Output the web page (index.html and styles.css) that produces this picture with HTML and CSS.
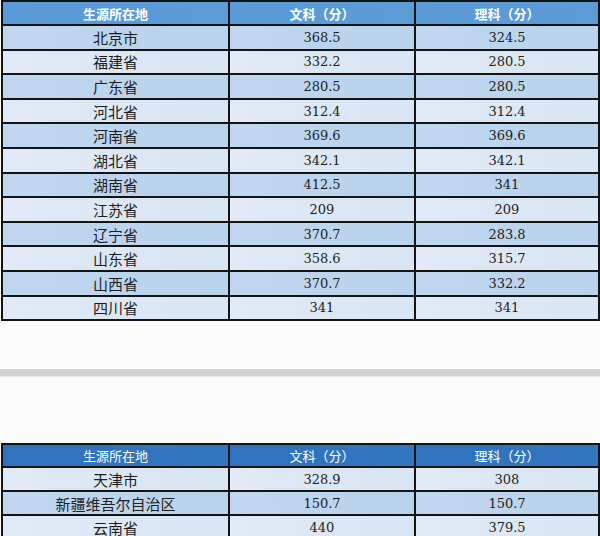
FILE: index.html
```html
<!DOCTYPE html>
<html lang="zh">
<head>
<meta charset="utf-8">
<link rel="stylesheet" href="styles.css">
</head>
<body>
<div class="page">
  <div class="grid t1">
    <div class="h">生源所在地</div><div class="h">文科（分）</div><div class="h">理科（分）</div>
    <div class="c d zh">北京市</div><div class="c d n">368.5</div><div class="c d n">324.5</div>
    <div class="c l zh">福建省</div><div class="c l n">332.2</div><div class="c l n">280.5</div>
    <div class="c d zh">广东省</div><div class="c d n">280.5</div><div class="c d n">280.5</div>
    <div class="c l zh">河北省</div><div class="c l n">312.4</div><div class="c l n">312.4</div>
    <div class="c d zh">河南省</div><div class="c d n">369.6</div><div class="c d n">369.6</div>
    <div class="c l zh">湖北省</div><div class="c l n">342.1</div><div class="c l n">342.1</div>
    <div class="c d zh">湖南省</div><div class="c d n">412.5</div><div class="c d n">341</div>
    <div class="c l zh">江苏省</div><div class="c l n">209</div><div class="c l n">209</div>
    <div class="c d zh">辽宁省</div><div class="c d n">370.7</div><div class="c d n">283.8</div>
    <div class="c l zh">山东省</div><div class="c l n">358.6</div><div class="c l n">315.7</div>
    <div class="c d zh">山西省</div><div class="c d n">370.7</div><div class="c d n">332.2</div>
    <div class="c l zh">四川省</div><div class="c l n">341</div><div class="c l n">341</div>
  </div>
  <div class="sep"></div>
  <div class="grid t2">
    <div class="h">生源所在地</div><div class="h">文科（分）</div><div class="h">理科（分）</div>
    <div class="c l zh">天津市</div><div class="c l n">328.9</div><div class="c l n">308</div>
    <div class="c d zh">新疆维吾尔自治区</div><div class="c d n">150.7</div><div class="c d n">150.7</div>
    <div class="c l zh">云南省</div><div class="c l n">440</div><div class="c l n">379.5</div>
  </div>
</div>
</body>
</html>
```
FILE: styles.css
```css
html, body {
  margin: 0;
  padding: 0;
  background: #fcfcfd;
  overflow: hidden;
}
.page {
  width: 600px;
  height: 536px;
  overflow: hidden;
  padding-left: 1px;
  box-sizing: border-box;
}
.grid {
  display: grid;
  grid-template-columns: 225px 184px 182px;
  gap: 2px;
  padding: 2px;
  background: #141414;
  width: 599px;
  box-sizing: border-box;
}
.t1 {
  grid-template-rows: 22px repeat(12, 22.6px);
}
.t2 {
  margin-top: 66px;
  grid-template-rows: 21px 22px 22px 22px;
}
.sep {
  height: 7px;
  margin-top: 48px;
  margin-left: -1px;
  width: 600px;
  background: #d2d2d4;
  border-bottom: 1px solid #e6e6e8;
}
.h {
  display: flex;
  align-items: center;
  justify-content: center;
  color: #ffffff;
  font-family: "Noto Sans CJK SC", sans-serif;
  font-size: 13px;
}
.t1 .h {
  font-weight: bold;
  background: linear-gradient(to right, #5a9ad8, #5c9bd6);
}
.t2 .h {
  font-weight: normal;
  background: linear-gradient(to right, #2f72bd, #3177be);
}
.c {
  display: flex;
  align-items: center;
  justify-content: center;
  color: #1e1e1e;
}
.d {
  background: linear-gradient(to right, #bfd6ee, #b9d3ec);
}
.l {
  background: linear-gradient(to right, #e1eaf6, #d8e5f3);
}
.zh {
  font-family: "Noto Sans CJK SC", sans-serif;
  font-size: 15px;
}
.n {
  font-family: "DejaVu Serif", serif;
  font-size: 13px;
}
```
